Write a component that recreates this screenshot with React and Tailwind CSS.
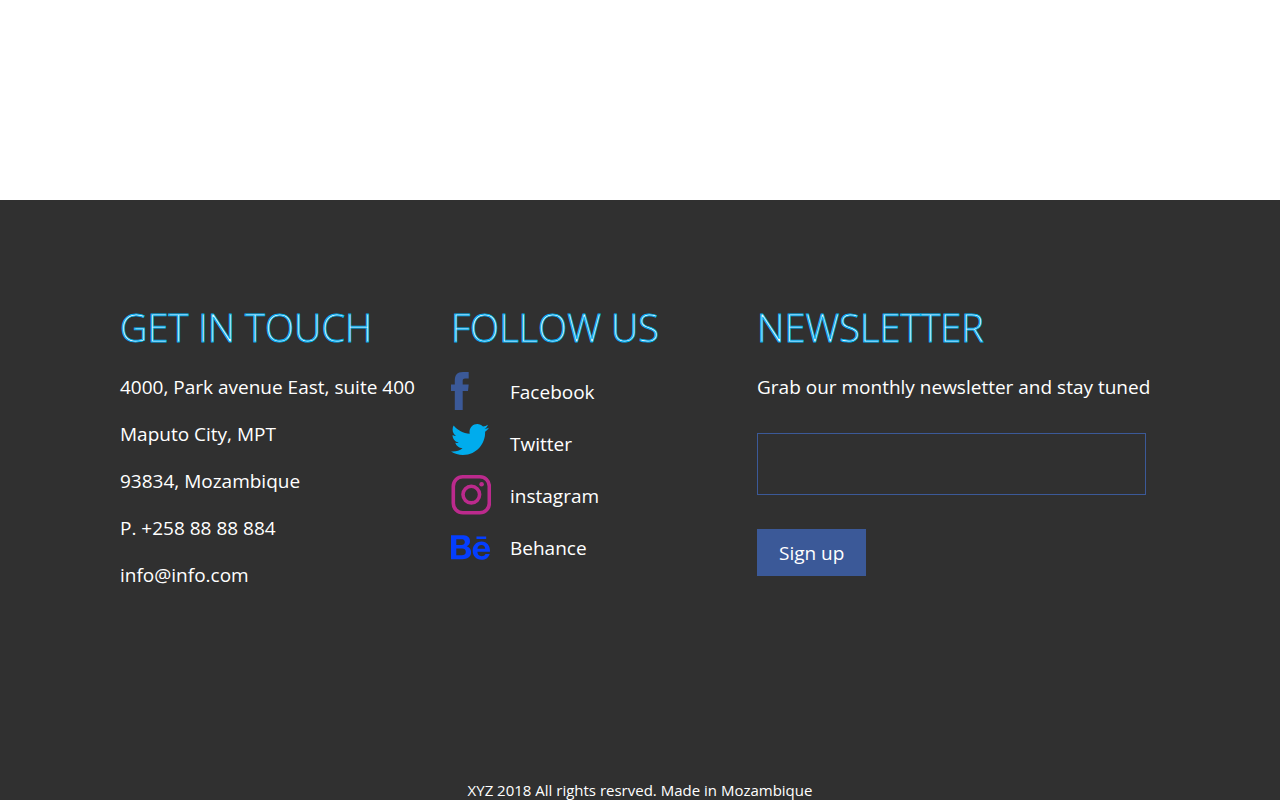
import React from "react";
import { FaTwitter, FaBehance } from "react-icons/fa";

function FacebookIcon() {
  return (
    <svg viewBox="0 0 18 38" className="h-[38px] w-[18px]" fill="#3b5998" aria-hidden="true">
      <path d="M3.800 38V19H0V12.500H3.800V8.600C3.800 3.300 6 0 12 0H17.700V6.500H14.200C12 6.500 11.700 7.400 11.700 9.100V12.500H17.700L17 19H11.700V38Z" />
    </svg>
  );
}

function InstagramIcon() {
  return (
    <svg viewBox="0 0 40 40" className="size-10" fill="none" stroke="#bc2a8d" strokeWidth="3.600" aria-hidden="true">
      <rect x="2.300" y="1.800" width="36" height="36" rx="9.500" />
      <circle cx="20.300" cy="19.600" r="8.300" />
      <circle cx="30.600" cy="9.200" r="2.300" fill="#bc2a8d" stroke="none" />
    </svg>
  );
}

const address = [
  "4000, Park avenue East, suite 400",
  "Maputo City, MPT",
  "93834, Mozambique",
  "P. +258 88 88 884",
  "info@info.com",
];

const socials = [
  { name: "Facebook", icon: <FacebookIcon /> },
  {
    name: "Twitter",
    icon: <FaTwitter viewBox="0 48 512 416" className="mt-px h-[31px] w-[38px] self-start text-[#00aced]" />,
  },
  { name: "instagram", icon: <InstagramIcon /> },
  { name: "Behance", icon: <FaBehance className="size-[39px] text-[#053eff]" /> },
];

function Heading({ children }) {
  return (
    <h2 className="whitespace-nowrap text-[38px] leading-[54px] font-light text-white [-webkit-text-stroke:1px_#00aeef]">
      {children}
    </h2>
  );
}

export default function App() {
  return (
    <div className="flex min-h-screen flex-col overflow-x-hidden bg-white pt-[200px] font-['Open_Sans','Noto_Sans',sans-serif]">
      <footer className="flex grow flex-col bg-[#303030] px-6 pt-[100px] text-[19px] leading-[27px] text-white lg:px-[120px]">
        <div className="grid grow gap-y-10 lg:grid-cols-[331fr_306fr_403fr]">
          <section>
            <Heading>GET IN TOUCH</Heading>
            <div className="mt-5 flex flex-col gap-5">
              {address.map((line) => (
                <p key={line} className="whitespace-nowrap">{line}</p>
              ))}
            </div>
          </section>
          <section>
            <Heading>FOLLOW US</Heading>
            <ul className="mt-[17px] flex flex-col gap-[10px]">
              {socials.map((s) => (
                <li key={s.name}>
                  <a href="#" className="flex h-[42px] items-center">
                    <span className="flex h-10 w-[59px] items-center self-start">{s.icon}</span>
                    {s.name}
                  </a>
                </li>
              ))}
            </ul>
          </section>
          <section>
            <Heading>NEWSLETTER</Heading>
            <form className="mt-5 flex max-w-[389px] flex-col items-start" onSubmit={(e) => e.preventDefault()}>
              <label htmlFor="email" className="whitespace-nowrap">
                Grab our monthly newsletter and stay tuned
              </label>
              <input
                id="email"
                type="email"
                className="mt-8 h-[62px] w-full border border-[#3b5998] bg-transparent px-5 outline-none"
              />
              <button type="submit" className="mt-[34px] h-[47px] bg-[#3b5998] px-[22px] pt-0.5">
                Sign up
              </button>
            </form>
          </section>
        </div>
        <p className="text-center text-[15px] leading-5">XYZ 2018 All rights resrved. Made in Mozambique</p>
      </footer>
    </div>
  );
}
